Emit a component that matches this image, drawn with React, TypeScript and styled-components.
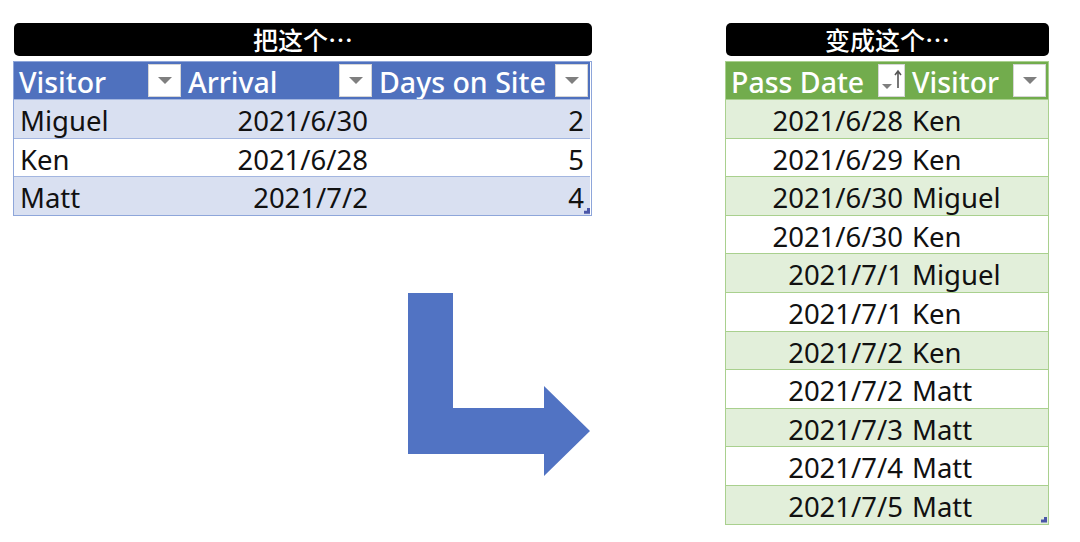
import styled, { createGlobalStyle } from 'styled-components'

const GlobalStyle = createGlobalStyle`
  html, body {
    margin: 0;
    padding: 0;
    background: #ffffff;
  }
  body {
    font-family: "Noto Sans", "Noto Sans CJK SC", sans-serif;
  }
`

type Tone = 'blue' | 'green'

const palette = {
  blue: { head: '#4F71BE', band: '#D9E0F1', line: '#A3B6E0', frame: '#8EA6DA' },
  green: { head: '#72AC4D', band: '#E2EFDA', line: '#A9D08E', frame: '#A9D08E' },
}

const Page = styled.div`
  display: flex;
  align-items: flex-start;
  gap: 133px;
  padding: 23px 0 0 13px;
  width: 1080px;
  height: 542px;
  box-sizing: border-box;
`

const Column = styled.div<{ $width: number }>`
  display: flex;
  flex-direction: column;
  width: ${(p) => p.$width}px;
`

const TitleBar = styled.div`
  height: 33px;
  margin-left: 1px;
  background: #000000;
  border-radius: 5px;
  color: #ffffff;
  font-family: "Noto Sans CJK SC", sans-serif;
  font-size: 25px;
  font-weight: 500;
  line-height: 33px;
  text-align: center;
`

const Table = styled.div<{ $tone: Tone; $cols: string }>`
  margin-top: 5px;
  display: grid;
  grid-template-columns: ${(p) => p.$cols};
  border: 1px solid ${(p) => palette[p.$tone].frame};
  position: relative;
  font-size: 27.5px;
  color: #111111;
`

const HeadCell = styled.div<{ $tone: Tone }>`
  height: 37px;
  display: flex;
  align-items: center;
  justify-content: space-between;
  padding-left: 5px;
  padding-right: 2px;
  background: ${(p) => palette[p.$tone].head};
  color: #ffffff;
  font-size: 28.5px;
  font-weight: 500;
  line-height: 37px;
  white-space: nowrap;
`

const HeadText = styled.span`
  padding-top: 3px;
`

const Cell = styled.div<{ $tone: Tone; $band: boolean; $align?: 'left' | 'right'; $pad?: string }>`
  height: 37.6px;
  line-height: 42px;
  border-top: 1px solid ${(p) => palette[p.$tone].line};
  background: ${(p) => (p.$band ? palette[p.$tone].band : '#ffffff')};
  text-align: ${(p) => p.$align || 'left'};
  padding: ${(p) => p.$pad || '0 6px'};
  white-space: nowrap;
  overflow: hidden;
`

const FilterBox = styled.div<{ $w?: number }>`
  width: ${(p) => p.$w || 33}px;
  height: 33px;
  background: #ffffff;
  border: 1px solid #d6d6d6;
  box-sizing: border-box;
  display: flex;
  align-items: center;
  justify-content: center;
  flex-shrink: 0;
`

const Resize = styled.div`
  position: absolute;
  right: 1px;
  bottom: 1px;
  width: 6px;
  height: 6px;
  background: #4a56a8;
  clip-path: polygon(100% 0, 100% 100%, 0 100%, 0 50%, 50% 50%, 50% 0);
`

const ArrowWrap = styled.div`
  margin: 77px 0 0 395px;
  width: 183px;
  height: 184px;
`

const Caret = () => (
  <svg width="14" height="8" viewBox="0 0 14 8">
    <path d="M0 0 H14 L7 7 Z" fill="#7f7f7f" />
  </svg>
)

const SortIcon = () => (
  <svg width="24" height="28" viewBox="0 0 24 28">
    <path d="M2 17 H12 L7 22 Z" fill="#7f7f7f" />
    <path d="M18 4 V21 M15 8 L18 4 L21 8" stroke="#555555" strokeWidth="1.6" fill="none" />
  </svg>
)

const left = [
  ['Miguel', '2021/6/30', '2'],
  ['Ken', '2021/6/28', '5'],
  ['Matt', '2021/7/2', '4'],
]

const right = [
  ['2021/6/28', 'Ken'],
  ['2021/6/29', 'Ken'],
  ['2021/6/30', 'Miguel'],
  ['2021/6/30', 'Ken'],
  ['2021/7/1', 'Miguel'],
  ['2021/7/1', 'Ken'],
  ['2021/7/2', 'Ken'],
  ['2021/7/2', 'Matt'],
  ['2021/7/3', 'Matt'],
  ['2021/7/4', 'Matt'],
  ['2021/7/5', 'Matt'],
]

export default function App() {
  return (
    <>
      <GlobalStyle />
      <Page>
        <Column $width={579}>
          <TitleBar>把这个…</TitleBar>
          <Table $tone="blue" $cols="169px 191px 216px">
            <HeadCell $tone="blue"><HeadText>Visitor</HeadText><FilterBox><Caret /></FilterBox></HeadCell>
            <HeadCell $tone="blue"><HeadText>Arrival</HeadText><FilterBox><Caret /></FilterBox></HeadCell>
            <HeadCell $tone="blue"><HeadText>Days on Site</HeadText><FilterBox><Caret /></FilterBox></HeadCell>
            {left.map((r, i) => (
              <>
                <Cell key={`a${i}`} $tone="blue" $band={i % 2 === 0}>{r[0]}</Cell>
                <Cell key={`b${i}`} $tone="blue" $band={i % 2 === 0} $align="right">{r[1]}</Cell>
                <Cell key={`c${i}`} $tone="blue" $band={i % 2 === 0} $align="right">{r[2]}</Cell>
              </>
            ))}
            <Resize />
          </Table>
          <ArrowWrap>
            <svg width="183" height="184" viewBox="0 0 183 184">
              <path d="M0 0 H45 V115 H136 V93 L182 138 L136 183 V161 H0 Z" fill="#5173C3" />
            </svg>
          </ArrowWrap>
        </Column>
        <Column $width={324}>
          <TitleBar>变成这个…</TitleBar>
          <Table $tone="green" $cols="181px 141px">
            <HeadCell $tone="green"><HeadText>Pass Date</HeadText><FilterBox $w={27}><SortIcon /></FilterBox></HeadCell>
            <HeadCell $tone="green"><HeadText>Visitor</HeadText><FilterBox><Caret /></FilterBox></HeadCell>
            {right.map((r, i) => (
              <>
                <Cell key={`d${i}`} $tone="green" $band={i % 2 === 0} $align="right" $pad="0 4px 0 6px">{r[0]}</Cell>
                <Cell key={`e${i}`} $tone="green" $band={i % 2 === 0} $pad="0 6px 0 5px">{r[1]}</Cell>
              </>
            ))}
            <Resize />
          </Table>
        </Column>
      </Page>
    </>
  )
}
